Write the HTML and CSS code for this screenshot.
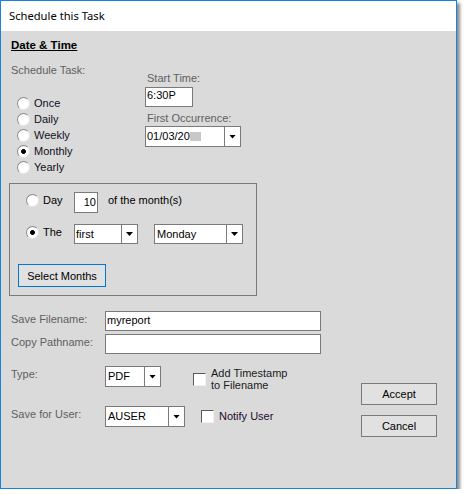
FILE: index.html
```html
<!DOCTYPE html>
<html>
<head>
<meta charset="utf-8">
<link rel="stylesheet" href="styles.css">
</head>
<body>
<div class="window">
  <div class="titlebar">Schedule this Task</div>
  <div class="content">
    <div class="section-title">Date &amp; Time</div>
    <div class="schedule">
      <div class="sched-left">
        <div class="label">Schedule Task:</div>
        <ul class="radios">
          <li class="radio-row"><span class="radio"></span><span>Once</span></li>
          <li class="radio-row"><span class="radio"></span><span>Daily</span></li>
          <li class="radio-row"><span class="radio"></span><span>Weekly</span></li>
          <li class="radio-row"><span class="radio checked"></span><span>Monthly</span></li>
          <li class="radio-row"><span class="radio"></span><span>Yearly</span></li>
        </ul>
      </div>
      <div class="sched-right">
        <div class="label">Start Time:</div>
        <div class="textbox time">6:30P</div>
        <div class="label occ">First Occurrence:</div>
        <div class="combo date"><span class="combo-text">01/03/20<span class="redact"></span></span><span class="combo-btn"><span class="arrow"></span></span></div>
      </div>
    </div>
    <div class="groupbox">
      <div class="g-row">
        <div class="g-radio"><span class="radio"></span><span>Day</span></div>
        <div class="textbox day">10</div>
        <span class="g-text month">of the month(s)</span>
      </div>
      <div class="g-row second">
        <div class="g-radio"><span class="radio checked"></span><span>The</span></div>
        <div class="combo first"><span class="combo-text">first</span><span class="combo-btn"><span class="arrow"></span></span></div>
        <div class="combo weekday"><span class="combo-text">Monday</span><span class="combo-btn"><span class="arrow"></span></span></div>
      </div>
      <button class="btn select">Select Months</button>
    </div>
    <div class="lower">
      <div class="fields">
        <div class="f-row">
          <span class="f-label">Save Filename:</span>
          <div class="textbox wide">myreport</div>
        </div>
        <div class="f-row copy">
          <span class="f-label">Copy Pathname:</span>
          <div class="textbox wide"></div>
        </div>
        <div class="f-row type">
          <span class="f-label">Type:</span>
          <div class="combo pdf"><span class="combo-text">PDF</span><span class="combo-btn"><span class="arrow"></span></span></div>
          <span class="checkbox stamp"></span>
          <span class="check-text stamp-text">Add Timestamp<br>to Filename</span>
        </div>
        <div class="f-row user">
          <span class="f-label">Save for User:</span>
          <div class="combo auser"><span class="combo-text">AUSER</span><span class="combo-btn"><span class="arrow"></span></span></div>
          <span class="checkbox notify"></span>
          <span class="check-text notify-text">Notify User</span>
        </div>
      </div>
      <div class="buttons">
        <button class="btn action">Accept</button>
        <button class="btn action cancel">Cancel</button>
      </div>
    </div>
  </div>
</div>
</body>
</html>
```
FILE: styles.css
```css
html, body {
  margin: 0;
  padding: 0;
  background: #ffffff;
}
body {
  font-family: "Liberation Sans", Arial, sans-serif;
  font-size: 11px;
  color: #000;
}
.window {
  width: 455px;
  height: 487px;
  border: 1px solid #1883d7;
  background: #dadada;
  box-shadow: 3px 3px 3px rgba(0, 0, 0, 0.45);
  display: flex;
  flex-direction: column;
}
.titlebar {
  height: 30px;
  flex: none;
  background: #fff;
  padding-left: 8px;
  font-family: "Noto Sans", sans-serif;
  font-size: 11.2px;
  line-height: 30px;
  color: #000;
}
.content {
  flex: 1;
  padding-left: 10px;
}
.section-title {
  margin-top: 8px;
  font-weight: bold;
  text-decoration: underline;
  line-height: 13px;
  font-size: 11.5px;
}
.schedule {
  display: flex;
  margin-top: 12px;
}
.sched-left {
  width: 134px;
}
.label {
  color: #5f5f5f;
  line-height: 13px;
}
.radios {
  list-style: none;
  margin: 18px 0 0 0;
  padding: 0;
}
.radio-row {
  display: flex;
  align-items: center;
  height: 16px;
  line-height: 16px;
  color: #101020;
}
.radio {
  flex: none;
  display: inline-block;
  width: 13px;
  height: 13px;
  box-sizing: border-box;
  border-radius: 50%;
  border: 1px solid;
  border-color: #8a8a8a #e6e6e6 #e6e6e6 #8a8a8a;
  background: #fff;
  margin-right: 4px;
}
.radio-row .radio {
  margin-left: 6px;
}
.radio.checked {
  background: radial-gradient(circle, #000 0 2.1px, #fff 2.7px);
}
.sched-right {
  display: flex;
  flex-direction: column;
  align-items: flex-start;
  padding-top: 8px;
}
.sched-right .label {
  padding-left: 2px;
}
.sched-right .occ {
  margin-top: 5px;
}
.textbox {
  box-sizing: border-box;
  background: #fff;
  border: 1px solid #7a7a7a;
  padding-left: 1px;
  color: #000;
}
.textbox.time {
  margin-top: 2px;
  width: 48px;
  height: 20px;
  line-height: 14px;
}
.combo {
  box-sizing: border-box;
  display: flex;
  background: #fff;
  border: 1px solid #7a7a7a;
  height: 21px;
  line-height: 19px;
}
.combo-text {
  flex: 1;
  padding-left: 1px;
  white-space: nowrap;
  overflow: hidden;
}
.combo-btn {
  flex: none;
  width: 16px;
  box-sizing: border-box;
  border-left: 1px solid #7a7a7a;
  display: flex;
  align-items: center;
  justify-content: center;
}
.arrow {
  width: 7px;
  height: 4px;
  background: #000;
  clip-path: polygon(0 0, 100% 0, 50% 100%);
}
.combo.date {
  margin-top: 1px;
  width: 96px;
}
.redact {
  display: inline-block;
  width: 11px;
  height: 9px;
  background: #c8c8c8;
  vertical-align: -1px;
}
.groupbox {
  margin: 8px 0 0 -2px;
  width: 248px;
  height: 113px;
  box-sizing: border-box;
  border: 1px solid #7a7a7a;
  padding-top: 8px;
}
.g-row {
  display: flex;
  align-items: center;
  height: 21px;
  margin-left: 16px;
}
.g-row.second {
  margin-top: 11px;
  height: 20px;
}
.g-radio {
  width: 48px;
  display: flex;
  align-items: center;
  line-height: 13px;
  margin-bottom: 4px;
}
.g-text {
  line-height: 13px;
  margin-bottom: 4px;
}
.textbox.day {
  width: 24px;
  height: 21px;
  line-height: 19px;
  text-align: right;
  padding-right: 1px;
}
.month {
  margin-left: 10px;
}
.combo.first {
  width: 64px;
  height: 20px;
  line-height: 18px;
}
.combo.weekday {
  width: 89px;
  height: 20px;
  line-height: 18px;
  margin-left: 16px;
}
.combo.weekday .combo-text {
  padding-left: 2px;
}
.btn {
  display: block;
  box-sizing: border-box;
  margin: 0;
  padding: 0;
  background: #e1e1e1;
  border: 1px solid #7a7a7a;
  font-family: "Liberation Sans", Arial, sans-serif;
  font-size: 11px;
  color: #000;
  text-align: center;
}
.btn.select {
  margin: 20px 0 0 8px;
  width: 88px;
  height: 23px;
  border-color: #0078d7;
}
.lower {
  display: flex;
  align-items: flex-start;
}
.fields {
  margin-top: 15px;
  width: 310px;
}
.f-row {
  display: flex;
  align-items: flex-start;
}
.f-row.copy {
  margin-top: 3px;
}
.f-label {
  flex: none;
  width: 94px;
  padding-top: 2px;
  line-height: 13px;
  color: #5f5f5f;
}
.textbox.wide {
  width: 216px;
  height: 20px;
  line-height: 17px;
}
.f-row.type {
  margin-top: 12px;
  height: 21px;
}
.combo.pdf {
  width: 56px;
  flex: none;
}
.combo.pdf .combo-text, .combo.auser .combo-text {
  padding-left: 2px;
}
.checkbox {
  flex: none;
  width: 13px;
  height: 13px;
  box-sizing: border-box;
  border: 1px solid;
  border-color: #5a5a5a #f2f2f2 #f2f2f2 #5a5a5a;
  background: #fff;
}
.checkbox.stamp {
  margin: 7px 0 0 32px;
}
.check-text {
  margin-left: 5px;
  color: #1a1a1a;
}
.stamp-text {
  line-height: 12px;
  margin-top: 1px;
}
.f-row.user {
  margin-top: 19px;
  height: 21px;
  align-items: center;
}
.f-row.user .f-label {
  align-self: flex-start;
}
.combo.auser {
  width: 80px;
  flex: none;
}
.checkbox.notify {
  margin-left: 16px;
}
.notify-text {
  line-height: 13px;
  color: #1a0a2a;
}
.buttons {
  margin: 87px 0 0 40px;
}
.btn.action {
  width: 76px;
  height: 22px;
}
.btn.cancel {
  margin-top: 10px;
}
```
